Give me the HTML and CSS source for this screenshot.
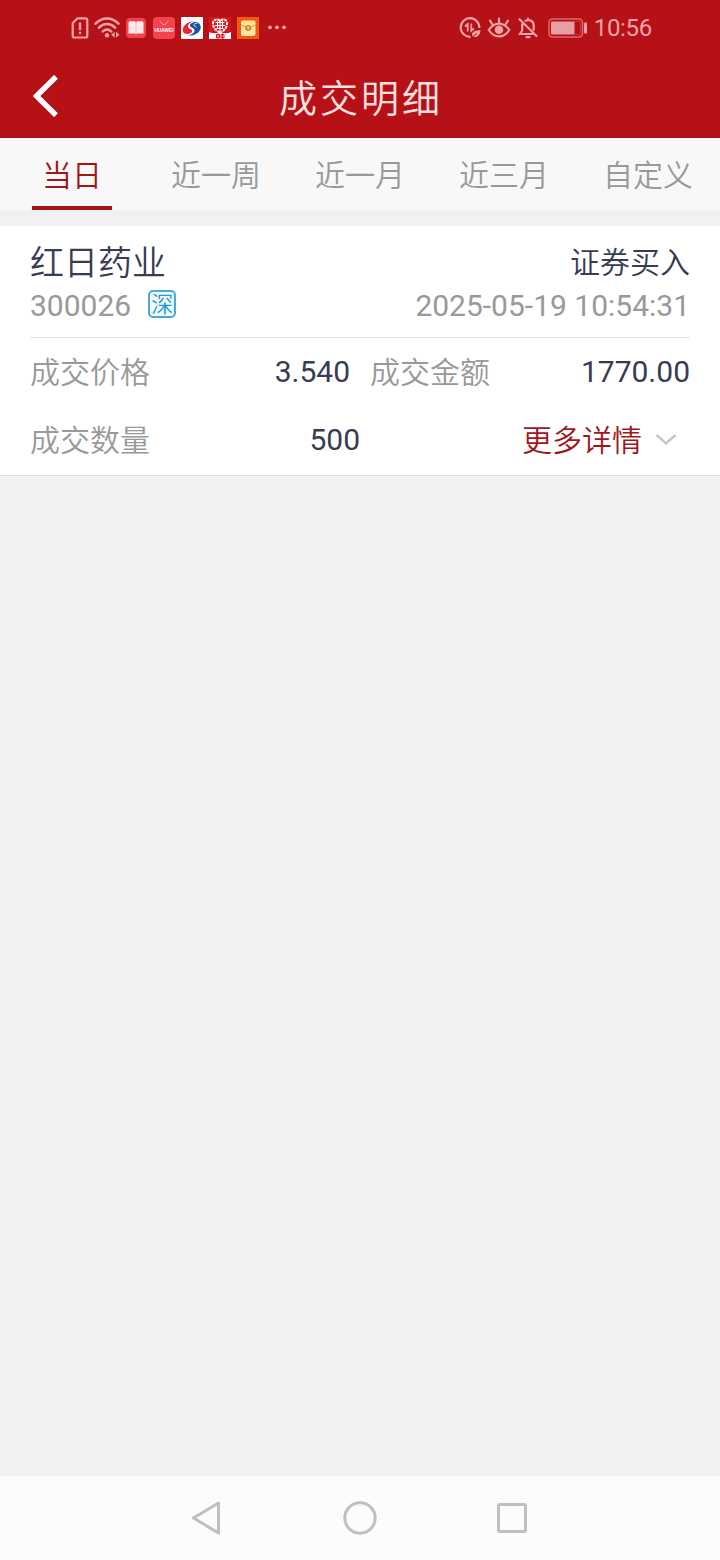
FILE: index.html
```html
<!DOCTYPE html>
<html lang="zh-CN">
<head>
    <meta charset="UTF-8">
    <meta name="viewport" content="width=device-width, initial-scale=1.0">
    <title>成交明细</title>
    <link rel="stylesheet" href="styles.css">
</head>
<body>
    <header class="header">
        <div class="status-bar">
            <div class="status-left">
                <svg width="18" height="22" viewBox="0 0 18 22" fill="none" stroke="#f0a3a6" stroke-width="2.200" stroke-linejoin="round" stroke-linecap="round">
                    <path d="M6.500 1.300h8a1.800 1.800 0 0 1 1.800 1.800v15.600a1.800 1.800 0 0 1-1.800 1.800h-11a1.800 1.800 0 0 1-1.800-1.800V6z"/>
                    <path d="M9 6.500v5.500M9 15.800v.2" stroke-width="2.500"/>
                </svg>
                <svg class="wifi" width="26" height="22" viewBox="0 0 26 22" fill="none" stroke="#f0a3a6" stroke-width="2.500" stroke-linecap="round">
                    <path d="M1.500 6.700C8-.3 18-.3 24.500 6.700M5 10.700c4.500-5 11.500-5 16 0M8.800 14.500c2.600-2.700 5.800-2.700 8.400 0"/>
                    <circle cx="13" cy="18.300" r="2.200" fill="#f0a3a6" stroke="none"/>
                    <path d="M20.700 14.800v6l-3.500-3zM22 14.800v6l3.500-3z" fill="#f0a3a6" stroke="none"/>
                </svg>
                <svg class="app" width="22" height="22" viewBox="0 0 22 22">
                    <rect x="1" y="1" width="20" height="20" rx="4" fill="#f04450"/>
                    <path d="M3.500 5.500l1-1.300h5.500l1 1 1-1h5.500l1 1.300v11h-6.500l-1 1-1-1h-6.500z" fill="#ffe9e9"/>
                    <path d="M11 5.200v12" stroke="#f3b4b8" stroke-width="1"/>
                </svg>
                <svg class="app" width="22" height="22" viewBox="0 0 22 22">
                    <rect width="22" height="22" rx="4" fill="#f2434e"/>
                    <path d="M7.500 4.500c1.500 4 5.500 4 7 0" fill="none" stroke="#ffb0b2" stroke-width="1"/>
                    <text x="11" y="14.800" class="huawei">HUAWEI</text>
                </svg>
                <svg class="app" width="22" height="22" viewBox="0 0 22 22">
                    <rect width="22" height="22" rx="1" fill="#fff"/>
                    <path d="M13 4C6 4.500 1 9.800 1.700 14c.6 2.500 3.300 3.500 6 2.800 2.300-.6 3.800-2 3.600-3.300-.3-1.500-3.800-1.300-4.300-3.700C6.700 7.500 9.500 5 13 4z" fill="#e32c36"/>
                    <path d="M7 18.400c7.500 1 13.500-4.300 12.700-9-.5-3-3-4.700-6.200-4.400-3.500.5-5 2.500-4.500 4 .6 1.700 4.200 1.800 4.500 4.200.2 2.300-2.800 4.500-6.500 5.200z" fill="#1d539d"/>
                    <path d="M16.500 6.200c-2.500.2-4 1-3.700 2 .3.900 2 1 2.700 2.300" fill="none" stroke="#fff" stroke-width=".8"/>
                </svg>
                <svg class="app" width="22" height="22" viewBox="0 0 22 22">
                    <rect width="22" height="22" fill="#d8141c"/>
                    <path d="M0 15q5 2 7 1h8q3 1 7-1v7H0z" fill="#fff"/>
                    <path d="M11 15.500C6 13.500 3.500 9.500 4 5.500 5 2 8.500 1.500 11 4c2.500-2.500 6-2 7 1.500.5 4-2 8-7 10z" fill="none" stroke="#fff" stroke-width="2" stroke-dasharray="3 .8"/>
                    <path d="M6.500 5.500h9M6 8.500h10M7.500 11.500h7M11 4v12M8.500 4.500v7M13.500 4.500v7" stroke="#fff" stroke-width="1.100"/>
                    <path d="M7.500 17.500h3v3.500h-3zM9 16.500v4.500M12 17.500h3v3.500h-3zM13.500 16.500v4.500" fill="none" stroke="#d8141c" stroke-width="1"/>
                </svg>
                <svg class="app" width="22" height="22" viewBox="0 0 22 22">
                    <rect width="22" height="22" fill="#f4590d"/>
                    <rect x="4" y="3.500" width="14.500" height="15.500" rx="2" fill="#ffe6a1"/>
                    <path d="M4 7.500c2 2 4 2 5 2.200M18.500 7.500c-2 2-4 2-5 2.200" fill="none" stroke="#ed8b37" stroke-width="1"/>
                    <circle cx="11.200" cy="11" r="3" fill="#d97a25"/>
                    <path d="M9.700 10h3M11.200 10v3" stroke="#ffe6a1" stroke-width="1"/>
                </svg>
                <svg class="more" width="20" height="22" viewBox="0 0 20 22" fill="#f0a3a6">
                    <circle cx="3" cy="10.300" r="1.900"/><circle cx="10" cy="10.300" r="1.900"/><circle cx="17" cy="10.300" r="1.900"/>
                </svg>
            </div>
            <div class="status-right">
                <svg width="22" height="22" viewBox="0 0 22 22" fill="none" stroke="#f0a3a6" stroke-width="2.200">
                    <path d="M20.300 11A9.300 9.300 0 1 0 11.500 19.800"/>
                    <path d="M8.700 14.500V7L6 9.500M12.300 6.500v7.300l2.700-2.500" stroke-width="1.800"/>
                    <path d="M21.500 13c-5 .2-8.500 1.800-8.500 4.500 0 3 4 3.500 6.300 1.300 1.600-1.500 2.200-3.400 2.200-5.800z" fill="#f0a3a6" stroke="none"/>
                    <path d="M12 21l6-4.500" stroke="#b51117" stroke-width="1"/>
                </svg>
                <svg class="eye" width="24" height="22" viewBox="0 0 24 22" fill="none" stroke="#f0a3a6" stroke-width="2.200" stroke-linecap="round">
                    <path d="M1.700 13C7.500 4.500 16.500 4.500 22.300 13 16.500 21.500 7.500 21.500 1.700 13zM12 5.500v-4M5.200 7L3 3.700M18.800 7L21 3.700"/>
                    <circle cx="12" cy="12.800" r="4.300" fill="#f0a3a6" stroke="none"/>
                </svg>
                <svg class="bell" width="20" height="22" viewBox="0 0 20 22" fill="none" stroke="#f0a3a6" stroke-width="2.200" stroke-linecap="round">
                    <path d="M7.500 3.800c4-2 8.200.5 8.200 4.700v4.300M4.200 7v6.500L2 17h12.500M10 2.500v-1M8.500 20.200h3M1.500 2.200l17 16.800"/>
                </svg>
                <svg class="battery" width="40" height="20" viewBox="0 0 40 20" fill="none">
                    <rect x="1" y="1" width="33.500" height="18" rx="3.500" stroke="#e0686c" stroke-width="1.500"/>
                    <rect x="3" y="3.500" width="23.500" height="13" rx="1" fill="#e6a0a3"/>
                    <path d="M26.500 3.500H31q1.500 0 1.500 1.500v10q0 1.500-1.500 1.500h-4.500" stroke="#c8373c"/>
                    <rect x="36" y="4.500" width="3" height="11" rx="1" fill="#f0a3a6"/>
                </svg>
                <span class="clock">10:56</span>
            </div>
        </div>
        <div class="title-bar">
            <svg class="back" width="26" height="42" viewBox="0 0 26 42" fill="none" stroke="#fff" stroke-width="5.400">
                <path d="M24 1.800L4.500 21 24 40.200"/>
            </svg>
            <h1 class="title">成交明细</h1>
        </div>
    </header>

    <nav class="tabs">
        <div class="tab active">当日</div>
        <div class="tab">近一周</div>
        <div class="tab">近一月</div>
        <div class="tab">近三月</div>
        <div class="tab">自定义</div>
    </nav>

    <main class="content">
        <section class="card">
            <div class="card-head">
                <div class="line first">
                    <span class="name">红日药业</span>
                    <span class="type">证券买入</span>
                </div>
                <div class="line second">
                    <span class="code">300026</span>
                    <span class="market">深</span>
                    <span class="time">2025-05-19 10:54:31</span>
                </div>
            </div>
            <div class="row">
                <div class="cell">
                    <span class="label">成交价格</span>
                    <span class="value">3.540</span>
                </div>
                <div class="cell">
                    <span class="label">成交金额</span>
                    <span class="value">1770.00</span>
                </div>
            </div>
            <div class="row row-last">
                <div class="cell">
                    <span class="label">成交数量</span>
                    <span class="value">500</span>
                </div>
                <div class="detail">
                    <span class="detail-text">更多详情</span>
                    <svg width="22" height="14" viewBox="0 0 22 14" fill="none" stroke="#c4c6ca" stroke-width="2.400">
                        <path d="M1.500 2L11 10.500 20.500 2"/>
                    </svg>
                </div>
            </div>
        </section>
    </main>

    <footer class="nav-bar">
        <svg width="32" height="36" viewBox="0 0 32 36">
            <path d="M26.500 3v30L1.500 18z"/>
        </svg>
        <svg width="36" height="36" viewBox="0 0 36 36">
            <circle cx="18" cy="18" r="15.200"/>
        </svg>
        <svg width="32" height="36" viewBox="0 0 32 36">
            <rect x="2.500" y="4.500" width="27" height="27" rx="1"/>
        </svg>
    </footer>
</body>
</html>
```
FILE: styles.css
```css
* {
    box-sizing: border-box;
}
body {
    margin: 0;
    height: 1560px;
    display: flex;
    flex-direction: column;
    background-color: #f1f1f1;
    font-family: Roboto, "Noto Sans CJK SC", sans-serif;
    font-size: 30px;
    font-weight: 350;
    color: #373c54;
}
svg {
    display: block;
    flex: none;
}
.header {
    height: 138px;
    background-color: #b51117;
}
.status-bar {
    height: 56px;
    padding: 0 68px 0 71px;
    display: flex;
    justify-content: space-between;
    align-items: center;
}
.status-left, .status-right {
    display: flex;
    align-items: center;
}
.status-left {
    margin-top: -1px;
}
.wifi {
    margin: 0 4px 0 5px;
}
.app {
    margin: 1px 5px 0 1px;
}
.more {
    margin-left: 3px;
}
.huawei {
    font-family: "Liberation Sans", sans-serif;
    font-size: 4.800px;
    font-weight: bold;
    fill: #fff;
    text-anchor: middle;
}
.eye {
    margin-left: 6px;
}
.bell {
    margin-left: 7px;
}
.battery {
    margin-left: 10px;
}
.clock {
    margin-left: 6px;
    font-size: 24px;
    font-weight: 400;
    line-height: 28px;
    letter-spacing: -0.3px;
    color: #f0a3a6;
}
.title-bar {
    height: 82px;
    padding-left: 32px;
    display: grid;
    grid-template-columns: 26px 1fr 58px;
    align-items: center;
}
.back {
    margin-top: -2px;
}
.title {
    margin: 0;
    padding: 4px 0 0 2px;
    font-size: 38px;
    font-weight: 350;
    line-height: 56px;
    letter-spacing: 3px;
    text-align: center;
    color: #ffe0e0;
}
.tabs {
    height: 72px;
    display: grid;
    grid-template-columns: repeat(5, 1fr);
    background-color: #f8f8f8;
}
.tab {
    height: 72px;
    padding-top: 2px;
    line-height: 72px;
    text-align: center;
    color: #999;
}
.tab.active {
    margin: 0 32px;
    border-bottom: 4px solid #a1161b;
    color: #a1161b;
}
.content {
    flex: 1;
    padding-top: 16px;
}
.card {
    height: 250px;
    padding: 0 30px;
    background-color: #fff;
    border-bottom: 1px solid #dedede;
}
.card-head {
    height: 112px;
    padding-top: 13px;
    border-bottom: 1px solid #e2e2e2;
}
.line {
    height: 44px;
    display: flex;
    align-items: center;
}
.first {
    justify-content: space-between;
}
.name {
    margin-top: -2px;
    font-size: 34px;
}
.type {
    margin-top: -3px;
}
.code, .time, .value {
    font-weight: 400;
}
.code, .time, .label {
    color: #999;
}
.market {
    width: 28px;
    height: 28px;
    margin: -2px 0 0 17px;
    border: 2px solid #49a9d8;
    border-radius: 5px;
    background-color: #effaff;
    font-size: 22px;
    line-height: 25px;
    text-align: center;
    color: #2a95cf;
}
.time {
    margin-left: auto;
}
.row {
    height: 68px;
    display: grid;
    grid-template-columns: 320px 320px;
    column-gap: 20px;
}
.row-last {
    grid-template-columns: 330px 1fr;
    column-gap: 0;
}
.cell {
    display: flex;
    justify-content: space-between;
    align-items: center;
}
.label, .detail-text {
    margin-top: -4px;
}
.value {
    margin-top: -2px;
}
.detail {
    padding-right: 13px;
    display: flex;
    justify-content: flex-end;
    align-items: center;
    gap: 13px;
    color: #a1161b;
}
.nav-bar {
    height: 84px;
    display: flex;
    justify-content: center;
    align-items: center;
    gap: 118px;
    background-color: #fcfcfc;
}
.nav-bar svg {
    fill: none;
    stroke: #bfbfbf;
    stroke-width: 3;
    stroke-linejoin: round;
}
```
